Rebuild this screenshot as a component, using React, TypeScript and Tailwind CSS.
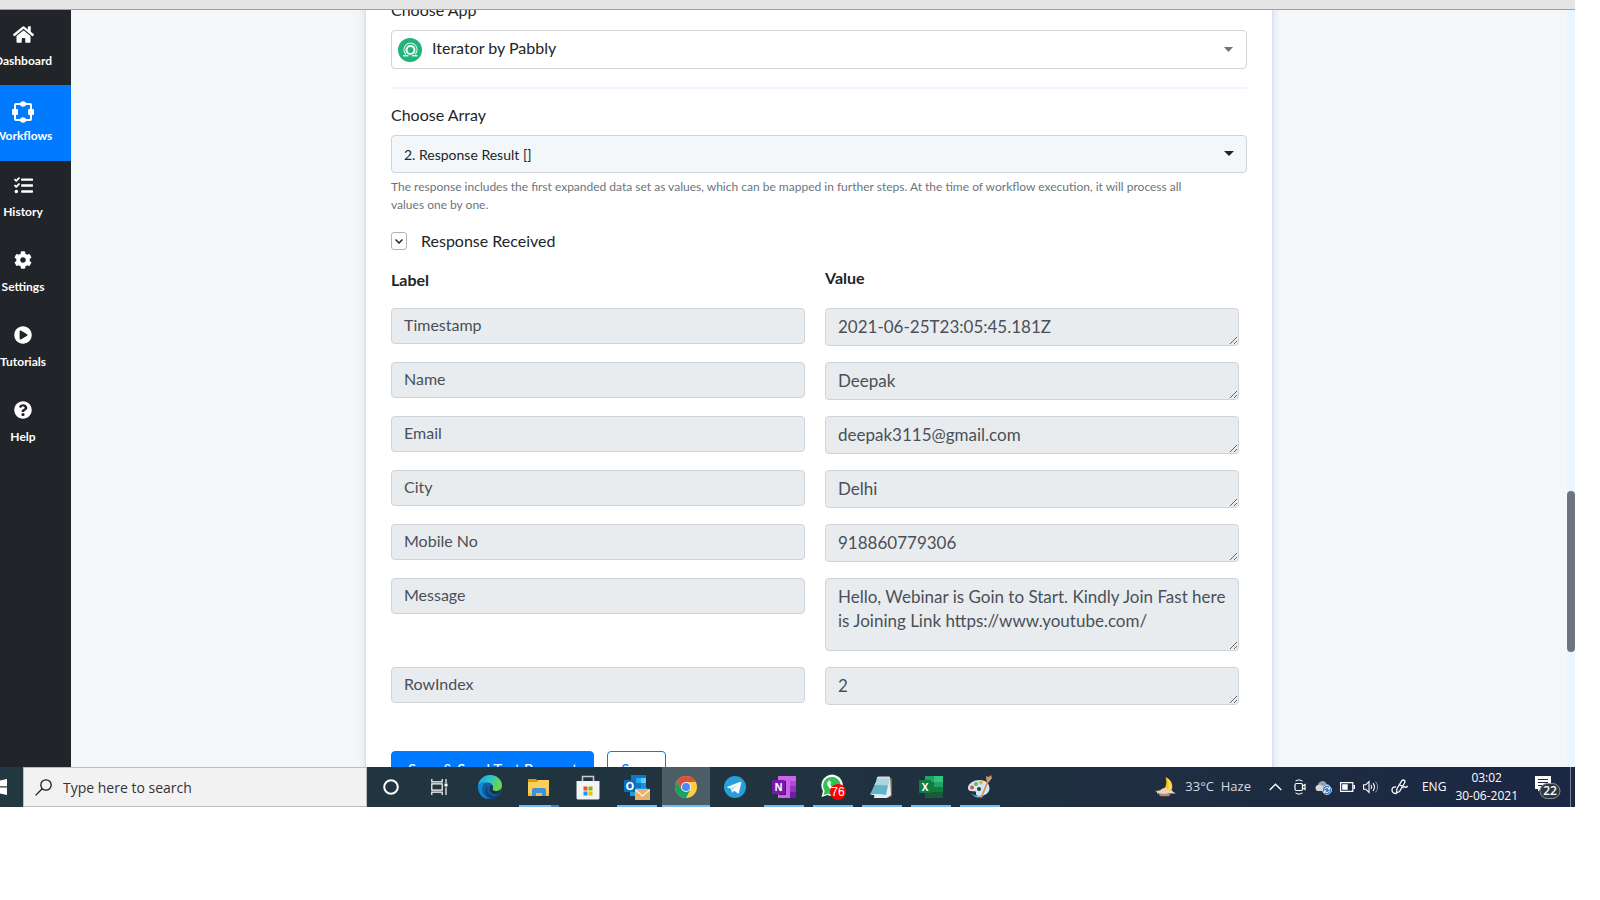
import React from "react";
import {
  FaCog,
  FaHome,
  FaPlayCircle,
  FaQuestionCircle,
  FaTasks,
} from "react-icons/fa";

type NavItem = {
  label: string;
  icon: React.ReactNode;
  active?: boolean;
};

type Field = {
  label: string;
  value: string;
  tall?: boolean;
};

const WorkflowIcon = () => (
  <svg width="22" height="22" viewBox="0 0 22 22" fill="none" className="self-end">
    <rect x="3" y="3" width="16" height="16" rx="1" stroke="white" strokeWidth="2" />
    <ellipse cx="11" cy="3" rx="3" ry="2.800" fill="white" />
    <ellipse cx="11" cy="19" rx="3" ry="2.800" fill="white" />
    <rect x="0" y="8" width="6" height="6" rx="1" fill="white" />
    <rect x="16" y="8" width="6" height="6" rx="1" fill="white" />
  </svg>
);

const navItems: NavItem[] = [
  { label: "Dashboard", icon: <FaHome size={21} /> },
  { label: "Workflows", icon: <WorkflowIcon />, active: true },
  { label: "History", icon: <FaTasks size={19} /> },
  { label: "Settings", icon: <FaCog size={18} /> },
  { label: "Tutorials", icon: <FaPlayCircle size={18} /> },
  { label: "Help", icon: <FaQuestionCircle size={18} /> },
];

const fields: Field[] = [
  { label: "Timestamp", value: "2021-06-25T23:05:45.181Z" },
  { label: "Name", value: "Deepak" },
  { label: "Email", value: "deepak3115@gmail.com" },
  { label: "City", value: "Delhi" },
  { label: "Mobile No", value: "918860779306" },
  {
    label: "Message",
    value:
      "Hello, Webinar is Goin to Start. Kindly Join Fast here is Joining Link https://www.youtube.com/",
    tall: true,
  },
  { label: "RowIndex", value: "2" },
];

function Sidebar() {
  return (
    <nav className="-ml-[25px] w-24 shrink-0 bg-[#212529] text-white">
      {navItems.map((item) => (
        <a
          key={item.label}
          href="#"
          className={`flex flex-col items-center pt-[10px] ${
            item.active ? "h-[76px] bg-[#007bff]" : "h-[75px]"
          }`}
        >
          <span className="flex h-7 items-center">{item.icon}</span>
          <span className="mt-[5px] text-[12px] leading-4 font-bold">{item.label}</span>
        </a>
      ))}
    </nav>
  );
}

function IteratorLogo() {
  return (
    <svg width="24" height="24" viewBox="0 0 24 24" fill="none">
      <circle cx="12" cy="12" r="12" fill="#22b378" />
      <circle cx="12.500" cy="12" r="4" strokeWidth="2" stroke="white" />
      <path d="M8 16.500a6.600 6.600 0 1 1 9 0" strokeWidth="1.200" stroke="#c5efdd" />
      <path d="M5 17.700h5.500M14 17.700h5.500" strokeWidth="1.400" stroke="#d8f5e8" />
    </svg>
  );
}

function FieldRow({ field }: { field: Field }) {
  return (
    <div className="grid grid-cols-2 items-start gap-5">
      <input
        aria-label={`${field.label} label`}
        defaultValue={field.label}
        readOnly
        className="h-9 w-full rounded border border-[#ced4da] bg-[#e9ecef] px-3 pb-[3px] text-base text-[#495057] outline-none"
      />
      <textarea
        aria-label={`${field.label} value`}
        defaultValue={field.value}
        readOnly
        className={`block w-full resize overflow-hidden rounded border border-[#ced4da] bg-[#e9ecef] px-3 py-[6px] text-[17px] leading-6 text-[#495057] outline-none ${
          field.tall ? "h-[73px]" : "h-[38px]"
        }`}
      />
    </div>
  );
}

function StepCard() {
  return (
    <section className="mx-auto -mt-3 w-full max-w-[908px] self-start border-x border-[#d3e0fb] bg-white px-[25px] pb-12 text-[#212529] shadow-[0_0_8px_rgba(33,37,41,0.12)]">
      <label htmlFor="app" className="block text-base leading-6">
        Choose App
      </label>
      <div className="relative mt-2">
        <span className="pointer-events-none absolute top-[8px] left-[7px]">
          <IteratorLogo />
        </span>
        <select
          id="app"
          className="block h-[39px] w-full appearance-none rounded border border-[#ced4da] bg-white pb-1 pl-10 text-base outline-none"
        >
          <option>Iterator by Pabbly</option>
        </select>
        <svg
          width="9"
          height="5"
          viewBox="0 0 9 5"
          className="pointer-events-none absolute top-[17px] right-[14px]"
        >
          <path d="M0 0h9L4.500 5z" fill="#6c757d" />
        </svg>
      </div>

      <hr className="mt-[18px] border-t-2 border-[#ebf5ff]" />

      <label htmlFor="array" className="mt-[14px] block text-base leading-6">
        Choose Array
      </label>
      <div className="relative mt-2">
        <select
          id="array"
          className="block h-[38px] w-full appearance-none rounded border border-[#ced4da] bg-[#f3f7fa] pt-[2px] pl-3 text-sm outline-none"
        >
          <option>2. Response Result []</option>
        </select>
        <svg
          width="10"
          height="5"
          viewBox="0 0 10 5"
          className="pointer-events-none absolute top-[16px] right-[13px]"
        >
          <path d="M0 0h10L5 5z" fill="#212529" />
        </svg>
      </div>
      <p className="mt-[5px] pr-8 text-xs leading-[18px] text-[#6c757d]">
        The response includes the first expanded data set as values, which can be mapped in
        further steps. At the time of workflow execution, it will process all values one by one.
      </p>

      <div className="mt-[15px] flex items-center">
        <span className="relative flex">
          <input
            id="received"
            type="checkbox"
            className="h-[18px] w-4 appearance-none rounded-[3px] border border-[#adb5bd]"
          />
          <svg
            width="8"
            height="5"
            viewBox="0 0 8 5"
            fill="none"
            className="pointer-events-none absolute top-[7px] left-1"
          >
            <path d="M.5.5 4 4 7.500.5" stroke="#212529" strokeWidth="1.500" />
          </svg>
        </span>
        <label htmlFor="received" className="ml-[14px] text-base leading-6">
          Response Received
        </label>
      </div>

      <div className="pr-2">
        <div className="mt-[13px] grid grid-cols-2 gap-5 text-base leading-6 font-bold">
          <span className="pt-[2px]">Label</span>
          <span>Value</span>
        </div>
        <div className="mt-4 flex flex-col gap-4">
          {fields.map((field) => (
            <FieldRow key={field.label} field={field} />
          ))}
        </div>
      </div>

      <div className="mt-[46px] flex gap-[13px] text-[15px]">
        <button className="h-[38px] rounded border border-[#007bff] bg-[#007bff] px-4 pb-[2px] text-white">
          Save &amp; Send Test Request
        </button>
        <button className="h-[38px] rounded border border-[#007bff] bg-white px-[13px] pb-[2px] text-[#007bff]">
          Save
        </button>
      </div>
    </section>
  );
}

/* ---------- taskbar icons ---------- */

const EdgeIcon = () => (
  <svg width="24" height="24" viewBox="0 0 24 24">
    <defs>
      <linearGradient id="edgeTop" x1="0" y1="0" x2="1" y2="0.4">
        <stop offset="0" stopColor="#1f9fe0" />
        <stop offset="0.5" stopColor="#2cc3cf" />
        <stop offset="1" stopColor="#6bd84a" />
      </linearGradient>
    </defs>
    <circle cx="12" cy="12" r="12" fill="#0f5fa8" />
    <path
      d="M0 11C1 4 6 0 12 0c7 0 12 5 12 10 0 4-3 6-6 6-2.500 0-4-1-3.500-2C16 11 14 7.500 9 7.500 5 7.500 1.500 9 0 11z"
      fill="url(#edgeTop)"
    />
    <path d="M0 12c0-3 4-5.500 8-4.500-3 2-4 4.500-4 7 0 4 3 8 7 9.400C5 24 0 19 0 12z" fill="#1486d8" />
    <path d="M10.500 11c-2 2-2 6 1.500 8.500 3 2 7 1.500 10.500-1.500-1 3-4 5.500-7.500 6-5-1-8-5-7.500-9 .3-2 1.400-3.400 3-4z" fill="#123f73" />
    <path d="M14 10c1.500 2 .5 3.500.4 4.300 0 1 1.500 1.900 3.600 1.900 2 0 4-.8 5-2.200-.3 2.500-1.500 4-3 5-4 1-8.500-1-8.500-5 0-2 1-3.500 2.500-4z" fill="#22323c" />
  </svg>
);

const ExplorerIcon = () => (
  <svg width="22" height="19" viewBox="0 0 22 19">
    <path d="M0 1h8l2 2v4H0z" fill="#e09a00" />
    <path d="M0 4h9l1-2h11v16H0z" fill="#fbcf5b" />
    <path d="M0 15h21v3H0z" fill="#f4bb3e" />
    <path d="M4 18v-6q0-2 2-2h10q2 0 2 2v6h-4v-3H8v3z" fill="#3c93d8" />
  </svg>
);

const StoreIcon = () => (
  <svg width="24" height="25" viewBox="0 0 24 25">
    <path d="M6.500 6V1.500h11V6" fill="none" stroke="#c9ccce" strokeWidth="1.500" />
    <path d="M.5 6h23v17q0 1.500-1.500 1.500H2Q.5 24.500.5 23z" fill="#f1f3f4" />
    <path d="M7.500 11.500h4v4h-4z" fill="#f25022" />
    <path d="M12.500 11.500h4v4h-4z" fill="#7fba00" />
    <path d="M7.500 16.500h4v4h-4z" fill="#00a4ef" />
    <path d="M12.500 16.500h4v4h-4z" fill="#ffb900" />
  </svg>
);

const OutlookIcon = () => (
  <svg width="26" height="26" viewBox="0 0 26 26">
    <path d="M7 1h15v13H7z" fill="#1573c4" />
    <path d="M12 4h5v5h-5z" fill="#28a8ea" />
    <path d="M17 4h5v5h-5z" fill="#50d0ff" />
    <path d="M17 9h5v5h-5z" fill="#1b8fdc" />
    <path d="M6 14h17v8H6z" fill="#1aa0e4" />
    <rect x="0" y="6" width="12" height="12" rx="1" fill="#0f6cbd" />
    <text x="6" y="16" textAnchor="middle" fontSize="11" fontWeight="700" fill="white" className="font-['Open_Sans',sans-serif]">
      O
    </text>
    <path d="M11 15h15v11H11z" fill="#e9b16b" />
    <path d="m11.500 16 7 6 7-6" fill="none" stroke="#fff3e0" strokeWidth="1.300" />
  </svg>
);

const ChromeIcon = () => (
  <svg width="22" height="22" viewBox="0 0 22 22">
    <circle cx="11" cy="11" r="11" fill="#ffcd40" />
    <path d="M1.470 5.500A11 11 0 0 1 20.800 6H11L6.700 13.500z" fill="#de4f43" />
    <path d="M1.470 5.500A11 11 0 0 0 11 22l4.300-8.500-4.300 2.500-4.300-2.500z" fill="#1aa260" />
    <circle cx="11" cy="11" r="5" fill="#f1f1f1" />
    <circle cx="11" cy="11" r="4" fill="#4a8af4" />
  </svg>
);

const TelegramIcon = () => (
  <svg width="22" height="22" viewBox="0 0 22 22">
    <circle cx="11" cy="11" r="11" fill="#279fda" />
    <path d="m3.500 10.800 12.800-5c.7-.2 1.200.1 1 1L15 16.600c-.2.900-.8 1-1.400.6l-3.400-2.500-1.700 1.700c-.4.300-.8.100-.8-.3l-.7-3.400-3.300-1c-.7-.2-.7-.6-.2-.9z" fill="#f4fafd" />
    <path d="m7.200 12.600 7.300-4.600-5.800 5.600-.5 2.300z" fill="#b9d9ea" />
  </svg>
);

const OneNoteIcon = () => (
  <svg width="24" height="22" viewBox="0 0 24 22">
    <path d="M6 0h18v22H6z" fill="#ca64ea" />
    <path d="M18 5h6v5h-6z" fill="#ae4bd5" />
    <path d="M18 10h6v6h-6z" fill="#9332bf" />
    <path d="M18 16h6v6h-6z" fill="#7719aa" />
    <path d="M7 5h7v14H7z" fill="#4d1670" />
    <rect x="0" y="4" width="13" height="14" rx="1" fill="#7719aa" />
    <text x="6.500" y="14.500" textAnchor="middle" fontSize="10" fontWeight="700" fill="white" className="font-['Open_Sans',sans-serif]">
      N
    </text>
  </svg>
);

const WhatsAppIcon = () => (
  <svg width="26" height="26" viewBox="0 0 26 26">
    <path d="M1.500 23 3 17A10.700 10.700 0 1 1 7.500 21z" fill="white" />
    <path d="m3.500 21 1.200-4.200a8.800 8.800 0 1 1 3.500 2.900z" fill="#31c351" />
    <path d="M8.500 7c.7-.8 1.700-.6 2 .2l.7 1.800-1 1.300c.9 1.800 2 2.900 3.800 3.700l1.400-1.400 2.200 1.200c.3 2-1.200 3-2.800 3C11 16.500 7 12 7.200 9.300c0-1 .6-1.800 1.300-2.300z" fill="white" />
    <circle cx="18" cy="18" r="8" fill="#ff0000" />
    <text x="18" y="22" textAnchor="middle" fontSize="12" fill="white" className="font-['Liberation_Sans',sans-serif]">
      76
    </text>
  </svg>
);

const NotepadIcon = () => (
  <svg width="24" height="23" viewBox="0 0 24 23">
    <path d="m20 2 2 1v17l-4 2z" fill="#8c6a3c" />
    <path d="M7 1h13l1 18-4 3H4z" fill="#e8edf0" />
    <path d="M7.500 2.500h12L16 19 .5 17.500z" fill="#62b4c6" />
    <path d="M7.500 2.500h12L18 9.500 4.500 9z" fill="#a7d8e2" />
    <path d="M8 .5h11.500v2H8z" fill="#d7dbdd" />
    <path d="M.5 17.500 16 19l-.5 2L.3 18.500z" fill="#d9eef3" />
  </svg>
);

const ExcelIcon = () => (
  <svg width="24" height="22" viewBox="0 0 24 22">
    <path d="M6 0h9v6H6z" fill="#21a366" />
    <path d="M15 0h9v6h-9z" fill="#33c481" />
    <path d="M6 6h9v5H6z" fill="#107c41" />
    <path d="M15 6h9v5h-9z" fill="#21a366" />
    <path d="M6 11h18v5H6z" fill="#107c41" />
    <path d="M6 16h18v6H6z" fill="#185c37" />
    <rect x="0" y="4" width="12" height="13" rx="1" fill="#107c41" />
    <text x="6" y="14.500" textAnchor="middle" fontSize="10" fontWeight="700" fill="white" className="font-['Open_Sans',sans-serif]">
      X
    </text>
  </svg>
);

const PaintIcon = () => (
  <svg width="24" height="24" viewBox="0 0 24 24">
    <path d="M12 5c6 0 9.500 4 9.500 8.500C21.500 18 17 21 11 21c-2 0-3.500-1-3-3 .4-1.500-.5-2-2.500-1.800C2 16.500 0 15.500 0 13c0-4.500 6-8 12-8z" fill="#cfe8f6" />
    <path d="M3 18c3 3 8 4 13 2l-2 2c-4 1-8 .5-11-4z" fill="#8fb6cf" />
    <circle cx="4" cy="12.500" r="2" fill="#e0523c" />
    <circle cx="8" cy="9" r="2" fill="#64b75a" />
    <circle cx="13" cy="7.500" r="2" fill="#f0b429" />
    <circle cx="11" cy="14" r="2" fill="#2b3a48" />
    <path d="m19.500 5 1.500 1-7 16.500q-1 1.500-1.500 0z" fill="#e08a3c" />
    <path d="m18 1 2.500 1L23 0l1 3-3 4-2.500-1z" fill="#c99a6b" />
  </svg>
);

const MoonIcon = () => (
  <svg width="22" height="20" viewBox="0 0 22 20">
    <path d="M11.500 0c5 2 8 7 6.500 12-1 3-3 4.500-6 5-4 .5-8-.5-11-3.500 5 1 9-.5 10.500-4 1.300-3 1-6 0-9.500z" fill="#fcc419" />
    <path d="M12.500 1c4 3 6 7 4.500 11l-3 1c1.500-4 1-8-1.500-12z" fill="#ffe14d" />
    <path d="M3 16q0-2.500 3-2.500 1.500-2.500 4.500-2.500t4 2.500q1-.8 2.500-.5 2 .5 2 2 2 .2 2.500 1.500H3z" fill="#e6d3c3" />
    <path d="M5 17h10q2 0 1 1.500-1 1-3 .8H7.500Q5 19.300 5 17z" fill="#b98a63" />
  </svg>
);

type Task = {
  name: string;
  icon: React.ReactNode;
  running?: boolean;
  focused?: boolean;
  stacked?: boolean;
};

const tasks: Task[] = [
  { name: "Edge", icon: <EdgeIcon /> },
  { name: "File Explorer", icon: <ExplorerIcon />, running: true, stacked: true },
  { name: "Store", icon: <StoreIcon /> },
  { name: "Outlook", icon: <OutlookIcon />, running: true },
  { name: "Chrome", icon: <ChromeIcon />, focused: true },
  { name: "Telegram", icon: <TelegramIcon /> },
  { name: "OneNote", icon: <OneNoteIcon />, running: true },
  { name: "WhatsApp", icon: <WhatsAppIcon />, running: true },
  { name: "Notepad", icon: <NotepadIcon />, running: true },
  { name: "Excel", icon: <ExcelIcon />, running: true },
  { name: "Paint", icon: <PaintIcon />, running: true },
];

function TaskButton({ task }: { task: Task }) {
  return (
    <button
      aria-label={task.name}
      className={`relative flex h-full w-12 items-center justify-center ${
        task.focused ? "bg-[#4d5d66]" : ""
      }`}
    >
      {task.icon}
      {task.focused && <span className="absolute inset-x-0 bottom-0 h-[2px] bg-[#76b9ed]" />}
      {task.running && (
        <span className="absolute inset-x-1 bottom-0 flex h-[2px] bg-[#76b9ed]">
          {task.stacked && <span className="ml-auto w-2 bg-[#4f83ac]" />}
        </span>
      )}
    </button>
  );
}

function Tray() {
  return (
    <div className="ml-auto flex h-full items-center font-['Open_Sans',sans-serif] text-xs text-white">
      <MoonIcon />
      <span className="ml-[9px] text-[13px] whitespace-pre text-[#d5dbe0]">33°C  Haze</span>
      <svg width="13" height="8" viewBox="0 0 13 8" fill="none" className="ml-[18px]">
        <path d="m.7 7 5.800-5.800L12.300 7" stroke="white" strokeWidth="1.300" />
      </svg>
      <svg width="12" height="16" viewBox="0 0 12 16" fill="none" stroke="white" className="ml-3">
        <path d="M1.500 2Q5-.5 8.500 2M1.500 14q3.500 2.500 7 0" />
        <rect x="1" y="4.500" width="7.500" height="7" rx="1.500" strokeWidth="1.200" />
        <path d="m8.500 7 2.500-1.500v5L8.500 9" strokeWidth="1.200" />
      </svg>
      <svg width="17" height="15" viewBox="0 0 17 15" className="ml-[9px]">
        <path d="M1 9q-1.500-3 2-4 .5-3.500 4.500-4 3 0 4 3 3.500 0 3.500 3.500L8 11H3Q1 11 1 9z" fill="#9aa0a6" />
        <path d="M1 9q-1.500-3 2-4 3-1 5 1l-1 5H3Q1 11 1 9z" fill="#d5d8da" />
        <circle cx="12" cy="10" r="4.500" fill="#1b6fc2" stroke="white" strokeWidth=".7" />
        <path d="M9.500 9.500q.5-2 2.500-2t2.500 1.500m0 1.500q-.5 2-2.500 2t-2.500-1.500M14.700 7v2.200h-2M9.300 13v-2.200h2" fill="none" stroke="white" />
      </svg>
      <svg width="15" height="10" viewBox="0 0 15 10" className="ml-2">
        <path d="M.6.6h12.200v8.800H.6z" fill="none" stroke="white" strokeWidth="1.200" />
        <path d="M2.200 2.200h5.500v5.600H2.200zM13.400 3H15v4h-1.600z" fill="white" />
      </svg>
      <svg width="17" height="14" viewBox="0 0 17 14" fill="none" stroke="white" className="ml-2">
        <path d="M.6 4.800h2.200L6 1.500v11L2.800 9.200H.6z" strokeWidth="1.100" />
        <path d="M8 5q1.500 2 0 4M10 3.200q3 3.800 0 7.600" strokeWidth="1.100" />
        <path d="M12.400 1.500q4.500 5.500 0 11" stroke="#8a93a5" />
      </svg>
      <svg width="17" height="16" viewBox="0 0 17 16" fill="none" stroke="white" className="ml-[11px]">
        <path d="M6 9.500 11 1.500q1.500-1 2.500 0t0 2.500L8.500 12.500l-3 1.500zM9 6l2.500 1.500" strokeWidth="1.300" />
        <path d="M5 8Q1 7.500 1 11q0 3.500 4.500 3.500M11.500 9q1.500-2 2.500-1t2.500-1" strokeWidth="1.300" />
      </svg>
      <span className="ml-[14px]">ENG</span>
      <time className="ml-[9px] text-center leading-[18px]">
        03:02
        <br />
        30-06-2021
      </time>
      <span className="relative ml-4 h-7 w-7">
        <svg width="28" height="28" viewBox="0 0 28 28">
          <path d="M1 3h16v13H6.500L4 18.500V16H1z" fill="white" />
          <path d="M4 6.500h10M4 9.500h10M4 12.500h7" stroke="#1d2a41" />
          <rect x="6" y="10.500" width="20" height="15" rx="7.500" fill="#30373f" stroke="#8d949c" />
          <text x="16" y="22" textAnchor="middle" fontSize="12" fontWeight="600" fill="white">
            22
          </text>
        </svg>
      </span>
      <span className="mr-1 ml-[8px] h-full w-px bg-[#7b8494]" />
    </div>
  );
}

function Taskbar() {
  return (
    <footer className="flex h-10 shrink-0 items-center overflow-hidden bg-linear-to-r from-[#213840] via-[#20333f] to-[#1c2743]">
      <button aria-label="Start" className="h-full w-[23px]">
        <svg width="7" height="16" viewBox="0 0 7 16">
          <path d="M0 1.500 7 0v7.300H0zM0 8.500h7V16l-7-1.500z" fill="white" />
        </svg>
      </button>
      <label className="flex h-full w-[344px] items-center border border-[#bdbdbd] bg-[#f2f2f2] pl-[11px]">
        <svg width="17" height="17" viewBox="0 0 17 17" fill="none" stroke="#1c1c1c" strokeWidth="1.300">
          <circle cx="11" cy="6" r="5.200" />
          <path d="M7.200 9.800.6 16.400" />
        </svg>
        <input
          type="text"
          aria-label="Search"
          placeholder="Type here to search"
          className="ml-[11px] min-w-0 flex-1 pt-[2px] font-['Open_Sans',sans-serif] text-sm outline-none placeholder:text-[#333]"
        />
      </label>
      <button aria-label="Cortana" className="flex h-full w-12 items-center justify-center">
        <svg width="16" height="16" viewBox="0 0 16 16">
          <circle cx="8" cy="8" r="6.800" fill="none" stroke="white" strokeWidth="2" />
        </svg>
      </button>
      <button aria-label="Task View" className="mr-[3px] flex h-full w-12 items-center justify-center">
        <svg width="17" height="16" viewBox="0 0 17 16" fill="none" stroke="white" strokeWidth="1.200">
          <path d="M.8 0v2.800h10.400V0M.8 16v-2.800h10.400V16M.8 4.800h10.400v6.400H.8zM15 0v4M15 8.500V16" />
          <path d="M13.500 4.500h3v3h-3z" fill="white" stroke="none" />
        </svg>
      </button>
      <div className="flex h-full gap-px">
        {tasks.map((task) => (
          <TaskButton key={task.name} task={task} />
        ))}
      </div>
      <Tray />
    </footer>
  );
}

export default function App() {
  return (
    <div className="flex h-screen flex-col bg-white pr-[25px] pb-[93px] font-[Lato,sans-serif]">
      <div className="h-[10px] shrink-0 border-b border-[#9f9f9f] bg-[#e5e5e5]" />
      <div className="flex min-h-0 flex-1 overflow-hidden">
        <Sidebar />
        <main className="flex min-w-0 flex-1 overflow-hidden bg-[#f3f7fa]">
          <StepCard />
        </main>
        <div className="w-2 shrink-0 bg-[#ebf5ff] pt-[481px]">
          <div className="h-[161px] rounded-full bg-[#6c757d]" />
        </div>
      </div>
      <Taskbar />
    </div>
  );
}
